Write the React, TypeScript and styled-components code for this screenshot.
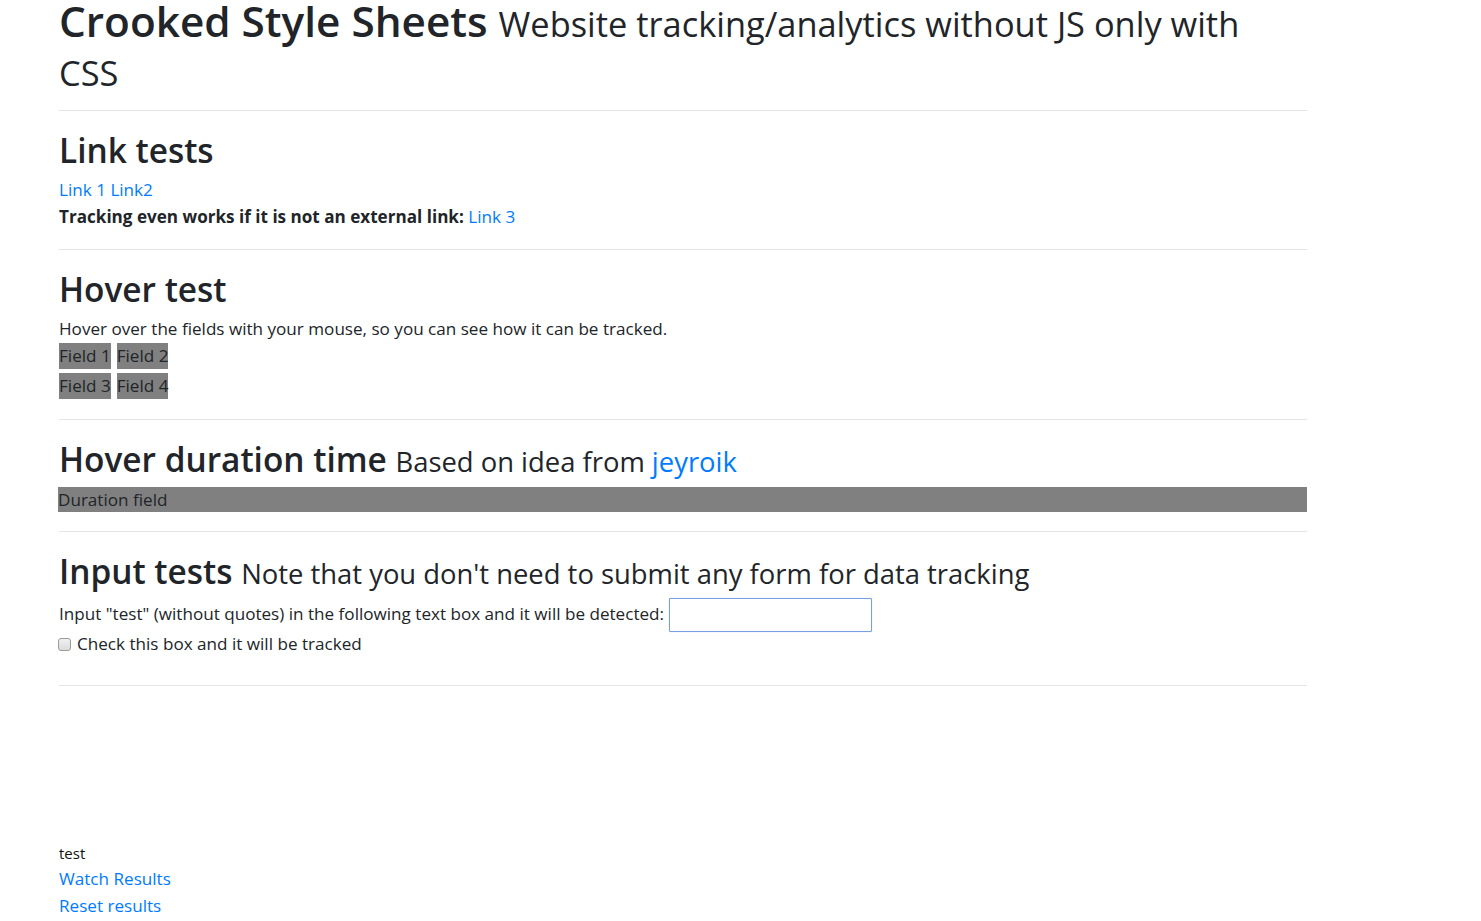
import React from "react";
import styled, { createGlobalStyle } from "styled-components";

const FONT = `"Open Sans", "Noto Sans", "Liberation Sans", sans-serif`;

const Global = createGlobalStyle`
  html, body { margin: 0; padding: 0; background: #fff; }
  body {
    font-family: ${FONT};
    font-size: 17.1px;
    line-height: 26.5px;
    color: #212529;
  }
  * { box-sizing: border-box; }
`;

const Container = styled.div`
  width: 1307px;
  padding-left: 59px;
`;

const Title = styled.h1`
  margin: -4px 0 0;
  font-size: 42.3px;
  font-weight: 600;
  line-height: 49px;
`;

const SubTitle = styled.small`
  font-size: 34.4px;
  font-weight: 400;
  line-height: 1;
`;

const Divider = styled.hr<{ $top: number; $bottom: number }>`
  border: 0;
  border-top: 1px solid rgba(0, 0, 0, 0.1);
  margin: ${(p) => p.$top}px 0 ${(p) => p.$bottom}px;
`;

const Heading = styled.h2<{ $gap?: number }>`
  margin: 0 0 ${(p) => p.$gap ?? 6}px;
  font-size: 33.4px;
  font-weight: 600;
  line-height: 42px;
`;

const HeadingNote = styled.small`
  font-size: 27.4px;
  font-weight: 400;
  line-height: 1;
`;

const Line = styled.div<{ $lh?: number }>`
  line-height: ${(p) => p.$lh ?? 26.5}px;
`;

const Strong = styled.b`
  font-weight: 700;
`;

const Link = styled.a`
  color: #007bff;
  text-decoration: none;
`;

const FieldGrid = styled.div`
  display: flex;
  flex-direction: column;
  gap: 4px;
`;

const FieldRow = styled.div`
  display: flex;
  gap: 6px;
`;

const Field = styled.div`
  background: #808080;
  color: #212529;
  line-height: 26px;
`;

const DurationField = styled.div`
  background: #808080;
  color: #212529;
  line-height: 25.5px;
  margin-left: -1px;
`;

const InputRow = styled.div`
  display: flex;
  align-items: center;
  gap: 5px;
  height: 33px;
`;

const TextBox = styled.input`
  width: 203px;
  height: 34px;
  border: 1px solid #7a9fe0;
  border-radius: 1px;
  box-shadow: 0 0 1px rgba(90, 140, 230, 0.5);
  outline: none;
  padding: 0 4px;
  font: inherit;
`;

const CheckRow = styled.label`
  display: flex;
  align-items: center;
  gap: 6px;
  line-height: 26px;
  margin-left: -1px;
`;

const CheckBox = styled.span`
  display: inline-block;
  width: 13px;
  height: 13px;
  border: 1px solid #9a9a9a;
  border-radius: 3px;
  background: linear-gradient(#f0f0f0, #dcdcdc);
`;

const Footer = styled.div`
  margin-top: 155px;
`;

const SmallText = styled.div`
  font-size: 15px;
  line-height: 24px;
  color: #111;
`;

export default function App() {
  return (
    <>
      <Global />
      <Container>
        <Title>
          Crooked Style Sheets{" "}
          <SubTitle>Website tracking/analytics without JS only with CSS</SubTitle>
        </Title>
        <Divider $top={16} $bottom={18} />

        <section>
          <Heading>Link tests</Heading>
          <Line>
            <Link href="#">Link 1</Link> <Link href="#">Link2</Link>
          </Line>
          <Line>
            <Strong>Tracking even works if it is not an external link:</Strong>{" "}
            <Link href="#">Link 3</Link>
          </Line>
        </section>
        <Divider $top={19} $bottom={18} />

        <section>
          <Heading>Hover test</Heading>
          <Line>Hover over the fields with your mouse, so you can see how it can be tracked.</Line>
          <FieldGrid>
            <FieldRow>
              <Field>Field 1</Field>
              <Field>Field 2</Field>
            </FieldRow>
            <FieldRow>
              <Field>Field 3</Field>
              <Field>Field 4</Field>
            </FieldRow>
          </FieldGrid>
        </section>
        <Divider $top={20} $bottom={18} />

        <section>
          <Heading $gap={7}>
            Hover duration time{" "}
            <HeadingNote>
              Based on idea from <Link href="#">jeyroik</Link>
            </HeadingNote>
          </Heading>
          <DurationField>Duration field</DurationField>
        </section>
        <Divider $top={19} $bottom={18} />

        <section>
          <Heading>
            Input tests{" "}
            <HeadingNote>Note that you don't need to submit any form for data tracking</HeadingNote>
          </Heading>
          <InputRow>
            <span>Input "test" (without quotes) in the following text box and it will be detected:</span>
            <TextBox type="text" />
          </InputRow>
          <CheckRow>
            <CheckBox />
            Check this box and it will be tracked
          </CheckRow>
        </section>
        <Divider $top={28} $bottom={0} />

        <Footer>
          <SmallText>test</SmallText>
          <Line $lh={27}>
            <Link href="#">Watch Results</Link>
          </Line>
          <Line $lh={27}>
            <Link href="#">Reset results</Link>
          </Line>
        </Footer>
      </Container>
    </>
  );
}
